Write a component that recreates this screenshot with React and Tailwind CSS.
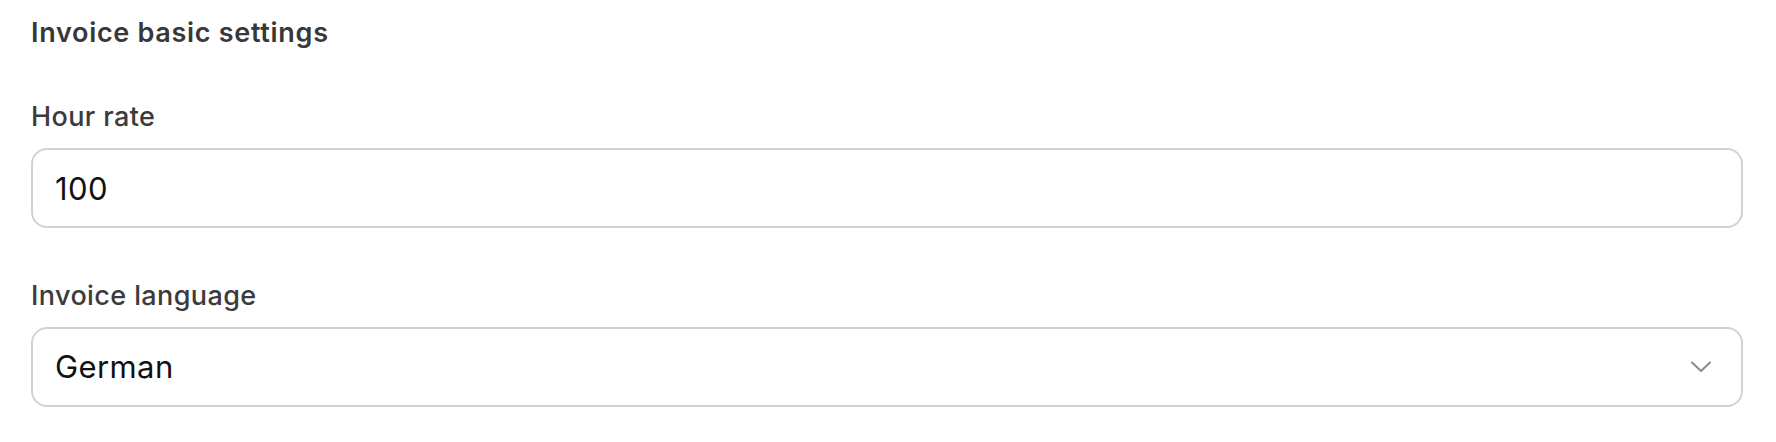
import { useState } from 'react'

function Field({ label, children }) {
  return (
    <div>
      <label className="block text-[27px] leading-[32px] font-medium tracking-[0.4px] text-[#3b3b3b]">{label}</label>
      <div className="mt-[15px]">{children}</div>
    </div>
  )
}

export default function App() {
  const [rate, setRate] = useState('100')
  const [lang, setLang] = useState('German')

  return (
    <div
      className="min-h-[442px] bg-white pl-[31px] pr-[33px] pt-[17px]"
      style={{ fontFamily: 'Inter, "Noto Sans", sans-serif' }}
    >
      <h2 className="text-[27px] leading-[32px] font-semibold tracking-[0.7px] text-[#383838]">Invoice basic settings</h2>

      <div className="mt-[52px] space-y-[52px]">
        <Field label="Hour rate">
          <input
            value={rate}
            onChange={(e) => setRate(e.target.value)}
            className="block h-[80px] w-full rounded-[16px] border-2 border-[#d2d2d2] bg-white pl-[22px] text-[31px] tracking-[0.4px] text-[#111] outline-none"
          />
        </Field>

        <Field label="Invoice language">
          <div className="relative">
            <select
              value={lang}
              onChange={(e) => setLang(e.target.value)}
              className="block h-[80px] w-full appearance-none rounded-[16px] border-2 border-[#d2d2d2] bg-white pl-[22px] text-[31px] tracking-[0.4px] text-[#111] outline-none"
            >
              <option>German</option>
              <option>English</option>
            </select>
            <svg
              className="pointer-events-none absolute right-[32px] top-1/2 -translate-y-1/2"
              width="20"
              height="12"
              viewBox="0 0 20 12"
              fill="none"
            >
              <polyline points="1,1.5 10,10 19,1.5" stroke="#8a8a8a" strokeWidth="2" strokeLinecap="round" strokeLinejoin="round" />
            </svg>
          </div>
        </Field>
      </div>
    </div>
  )
}
